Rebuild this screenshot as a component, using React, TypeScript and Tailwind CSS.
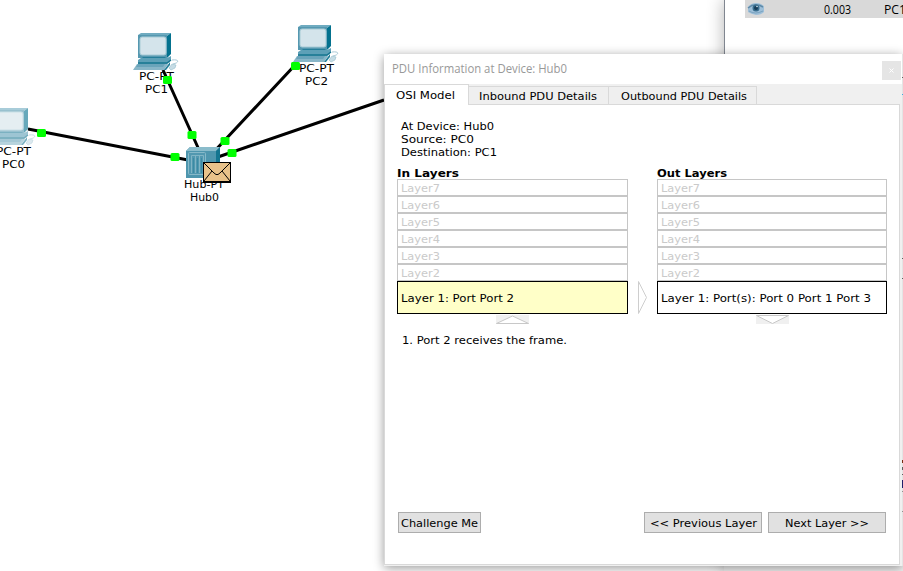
import type { ReactNode } from 'react';

const label = "absolute whitespace-nowrap text-center leading-[13px]";

function Fit({ w, children, className = '' }: { w: number; children: string; className?: string }) {
  return (
    <svg width={w} height={13} className={`block shrink-0 overflow-visible ${className}`}>
      <text x={0} y={10} textLength={w} lengthAdjust="spacingAndGlyphs" fill="currentColor">{children}</text>
    </svg>
  );
}

function Pc({ x, y, faded = false }: { x: number; y: number; faded?: boolean }) {
  return (
    <svg x={x} y={y} width="46" height="40" opacity={faded ? 0.6 : 1}>
      <path d="M5 2L8 0H38L34 3V24H5Z" fill="#6fabc0" />
      <path d="M34 3L38 0V21L34 25Z" fill="#03718e" />
      <rect x="5" y="2" width="29" height="23" fill="#5598b0" />
      <rect x="7" y="4" width="26" height="18" rx="2" fill="#d4e4eb" stroke="#a8cbd6" />
      <path d="M10 24H32L34 26H8Z" fill="#247e99" />
      <path d="M5 27L8 25H34L38 23V27L34 31H5Z" fill="#5da0b7" />
      <path d="M5 30H34L38 27" fill="none" stroke="#167590" strokeWidth="1.5" />
      <path d="M0 37L4 31H35L31 37Z" fill="#88b6c8" />
      <path d="M3 34L5 31H32L30 34Z" fill="#6aa4ba" />
      <path d="M31 37L37 29V32L33 37Z" fill="#207d98" />
      <path d="M39 27C47 26 46 30 40 31" fill="none" stroke="#a8c9d6" />
      <path d="M36 35L39 31L43 32L42 35L38 37Z" fill="#c6dce5" stroke="#96bdcb" strokeWidth=".6" />
    </svg>
  );
}

function Topology() {
  return (
    <svg className="absolute inset-0" width="903" height="571">
      <g stroke="#000" strokeWidth="3">
        <path d="M28 129L188 160M163 70L200 152M296 64L210 156M384 100L215 158" />
      </g>
      <Pc x={133} y={33} />
      <Pc x={293} y={25} />
      <Pc x={-10} y={108} faded />
      <path d="M186 151L190 147H220L216 152V178H186Z" fill="#4e96ae" />
      <path d="M186 151L190 147H220L216 151Z" fill="#8abccb" />
      <path d="M216 151L220 147V174L216 178Z" fill="#137590" />
      <rect x="188.500" y="152.500" width="17" height="22" rx="1" fill="#5298b0" stroke="#86b9c9" />
      <path d="M191.500 173V155.500H203.500V173M195.500 156V173M199.500 156V173" fill="none" stroke="#80b5c5" />
      <path d="M193.500 158V173M197.500 158V173M201.500 158V173" stroke="#3b8ba4" />
    </svg>
  );
}

function Overlay() {
  return (
    <svg className="absolute inset-0" width="903" height="571">
      <g fill="#0f0">
        {[[167.500, 80], [295.500, 66], [41.500, 133], [192, 135], [225, 141], [232, 153], [175, 157]].map(([x, y]) => (
          <rect key={x} x={x - 4.5} y={y - 4} width="9" height="8" rx="1.500" />
        ))}
      </g>
      <rect x="203.500" y="162.500" width="27" height="19" fill="#e8c28a" stroke="#000" />
      <path d="M204 163L214 173L216 174.500H218L220 173L230 163M204 181L212 171M230 181L222 171" fill="none" stroke="#000" />
      <path d="M203 182.500H231M230.500 162V183" stroke="#000" />
    </svg>
  );
}

function Tab({ w, tw, pad = 'pl-[10px]', active = false, children }: { w: string; tw: number; pad?: string; active?: boolean; children: string }) {
  return (
    <div className={`flex border-[#d9d9d9] ${w} ${active ? 'h-[21px] border-x border-t bg-white pt-[4px] pl-[11px]' : `h-[19px] border-y border-r bg-[#efefef] pt-[3px] ${pad}`}`}>
      <Fit w={tw}>{children}</Fit>
    </div>
  );
}

function Stack({ title, tw, w, bg, text, textW, children }: { title: string; tw: number; w: string; bg: string; text: string; textW: number; children: ReactNode }) {
  return (
    <div className={`flex flex-col ${w}`}>
      <div className="h-[12px] font-bold"><Fit w={tw}>{title}</Fit></div>
      {[7, 6, 5, 4, 3, 2].map((n) => (
        <div key={n} className="h-[17px] border border-[#c6c6c6] pl-[3px] pt-[2px] text-[#cacaca]">
          <Fit w={39}>{`Layer${n}`}</Fit>
        </div>
      ))}
      <div className={`flex h-[33px] items-center border border-black pt-[2px] pl-[3px] ${bg}`}><Fit w={textW}>{text}</Fit></div>
      {children}
    </div>
  );
}

function Btn({ w, tw, children }: { w: string; tw: number; children: string }) {
  return (
    <button className={`flex h-[21px] items-center justify-center border border-[#adadad] bg-[#e1e1e1] pt-[2px] ${w}`}>
      <Fit w={tw}>{children}</Fit>
    </button>
  );
}

export default function App() {
  return (
    <main className="relative h-[571px] w-[903px] overflow-hidden bg-white font-['DejaVu_Sans',sans-serif] text-[11px] text-black">
      <Topology />
      <div className={label} style={{ left: 139, top: 70 }}><Fit w={35}>PC-PT</Fit><Fit w={23} className="ml-[6px]">PC1</Fit></div>
      <div className={label} style={{ left: 299, top: 62 }}><Fit w={35}>PC-PT</Fit><Fit w={23} className="ml-[6px]">PC2</Fit></div>
      <div className={label} style={{ left: -4, top: 145 }}><Fit w={35}>PC-PT</Fit><Fit w={23} className="ml-[6px]">PC0</Fit></div>
      <div className={label} style={{ left: 184, top: 178 }}><Fit w={40}>Hub-PT</Fit><Fit w={29} className="ml-[6px]">Hub0</Fit></div>
      <Overlay />

      <aside className="absolute top-0 left-[724px] flex h-[571px] w-[179px] flex-col bg-white shadow-[0_0_16px_rgba(0,0,0,0.3)]">
        <div className="h-[560px] border-l border-[#808690]">
          <div className="ml-[20px] flex h-[18px] items-center bg-[#d9d9d9] font-['Open_Sans',sans-serif] text-[12px]">
            <svg width="18" height="14" viewBox="0 0 18 14" className="ml-[2px] shrink-0">
              <path d="M1 5Q4 1 9 1Q15 1 17 5V10Q14 13 9 13Q4 12 1 10Z" fill="#9dbfd9" />
              <path d="M1 6Q8 0 16 5" fill="none" stroke="#5f8aa8" strokeWidth="1.5" />
              <path d="M2 9Q8 13 16 9" fill="none" stroke="#7ba3c0" />
              <circle cx="9" cy="6" r="3.500" fill="#376c8d" />
              <circle cx="9" cy="6" r="2" fill="#153c58" />
              <circle cx="10" cy="4.500" r=".8" fill="#d8e9f2" />
            </svg>
            <Fit w={27} className="mt-[2px] ml-[59px]">0.003</Fit>
            <Fit w={22} className="mt-[2px] ml-[33px]">PC1</Fit>
          </div>
        </div>
        <div className="flex-1 bg-[#f0f0f0]" />
      </aside>

      <section className="absolute top-[54px] left-[384px] flex h-[512px] w-[518px] flex-col bg-[#f0f0f0] shadow-[0_2px_10px_rgba(0,0,0,0.4)]">
        <header className="flex h-[30px] shrink-0 justify-between bg-white pr-[1px] pl-[8px] pt-[7px] font-['Open_Sans',sans-serif] text-[12px] text-[#999]">
          <Fit w={175} className="mt-[2px]">PDU Information at Device: Hub0</Fit>
          <button className="flex h-[19px] w-[19px] items-center justify-center bg-[#e5e5e5] text-white">
            <svg width="5" height="5"><path d="M.5 .5L4.500 4.500M4.500 .5L.5 4.500" stroke="currentColor" /></svg>
          </button>
        </header>
        <nav className="z-10 flex h-[21px] shrink-0 items-end">
          <Tab w="w-[85px]" tw={59} active>OSI Model</Tab>
          <Tab w="w-[140px]" tw={118}>Inbound PDU Details</Tab>
          <Tab w="w-[148px]" tw={126} pad="pl-[12px]">Outbound PDU Details</Tab>
        </nav>
        <div className="-mt-px flex h-[461px] w-[516px] flex-col border border-[#d9d9d9] bg-white pl-[12px] pt-[15px]">
          <div className="ml-[4px] flex h-[47px] flex-col">
            <Fit w={93}>At Device: Hub0</Fit>
            <Fit w={73}>Source: PC0</Fit>
            <Fit w={96}>Destination: PC1</Fit>
          </div>
          <div className="flex h-[157px]">
            <Stack title="In Layers" tw={62} w="w-[231px]" bg="bg-[#ffffc8]" text="Layer 1: Port Port 2" textW={113}>
              <svg width="33" height="9" className="mt-px ml-[99px] bg-[#f0f0f0]"><path d="M.5 8.500L16.500 1L32.500 8.500Z" fill="#fff" stroke="#c8c8c8" /></svg>
            </Stack>
            <svg width="9" height="33" className="mt-[114px] ml-[10px] mr-[10px] shrink-0"><path d="M.5 .5L8.500 16.500L.5 32.500Z" fill="#fff" stroke="#cecece" /></svg>
            <Stack title="Out Layers" tw={70} w="w-[230px]" bg="bg-white" text="Layer 1: Port(s): Port 0 Port 1 Port 3" textW={210}>
              <svg width="33" height="9" className="mt-px ml-[99px] bg-[#f0f0f0]"><path d="M.5 .5L16.500 8.500L32.500 .5Z" fill="#fff" stroke="#c8c8c8" /></svg>
            </Stack>
          </div>
          <div className="ml-[5px] mt-[10px]"><Fit w={165}>1. Port 2 receives the frame.</Fit></div>
          <div className="mt-auto mb-[31px] ml-px flex">
            <Btn w="w-[83px]" tw={77}>Challenge Me</Btn>
            <Btn w="w-[118px] ml-[163px] mr-[6px]" tw={107}>{'<< Previous Layer'}</Btn>
            <Btn w="w-[118px]" tw={84}>{'Next Layer >>'}</Btn>
          </div>
        </div>
      </section>

      <svg className="absolute top-0 left-[902px]" width="1" height="571">
        <rect y="54" width="1" height="512" fill="#e4e4e4" />
        <path d="M.5 77v1M.5 258v1M.5 278v1M.5 467v3M.5 474v1" stroke="#606060" />
        <path d="M.5 94v1" stroke="#3dabe0" />
        <path d="M.5 460v3" stroke="#7a2a10" />
        <path d="M.5 480v8" stroke="#20206a" />
        <path d="M.5 491v1M.5 511v1" stroke="#909090" />
      </svg>
    </main>
  );
}
